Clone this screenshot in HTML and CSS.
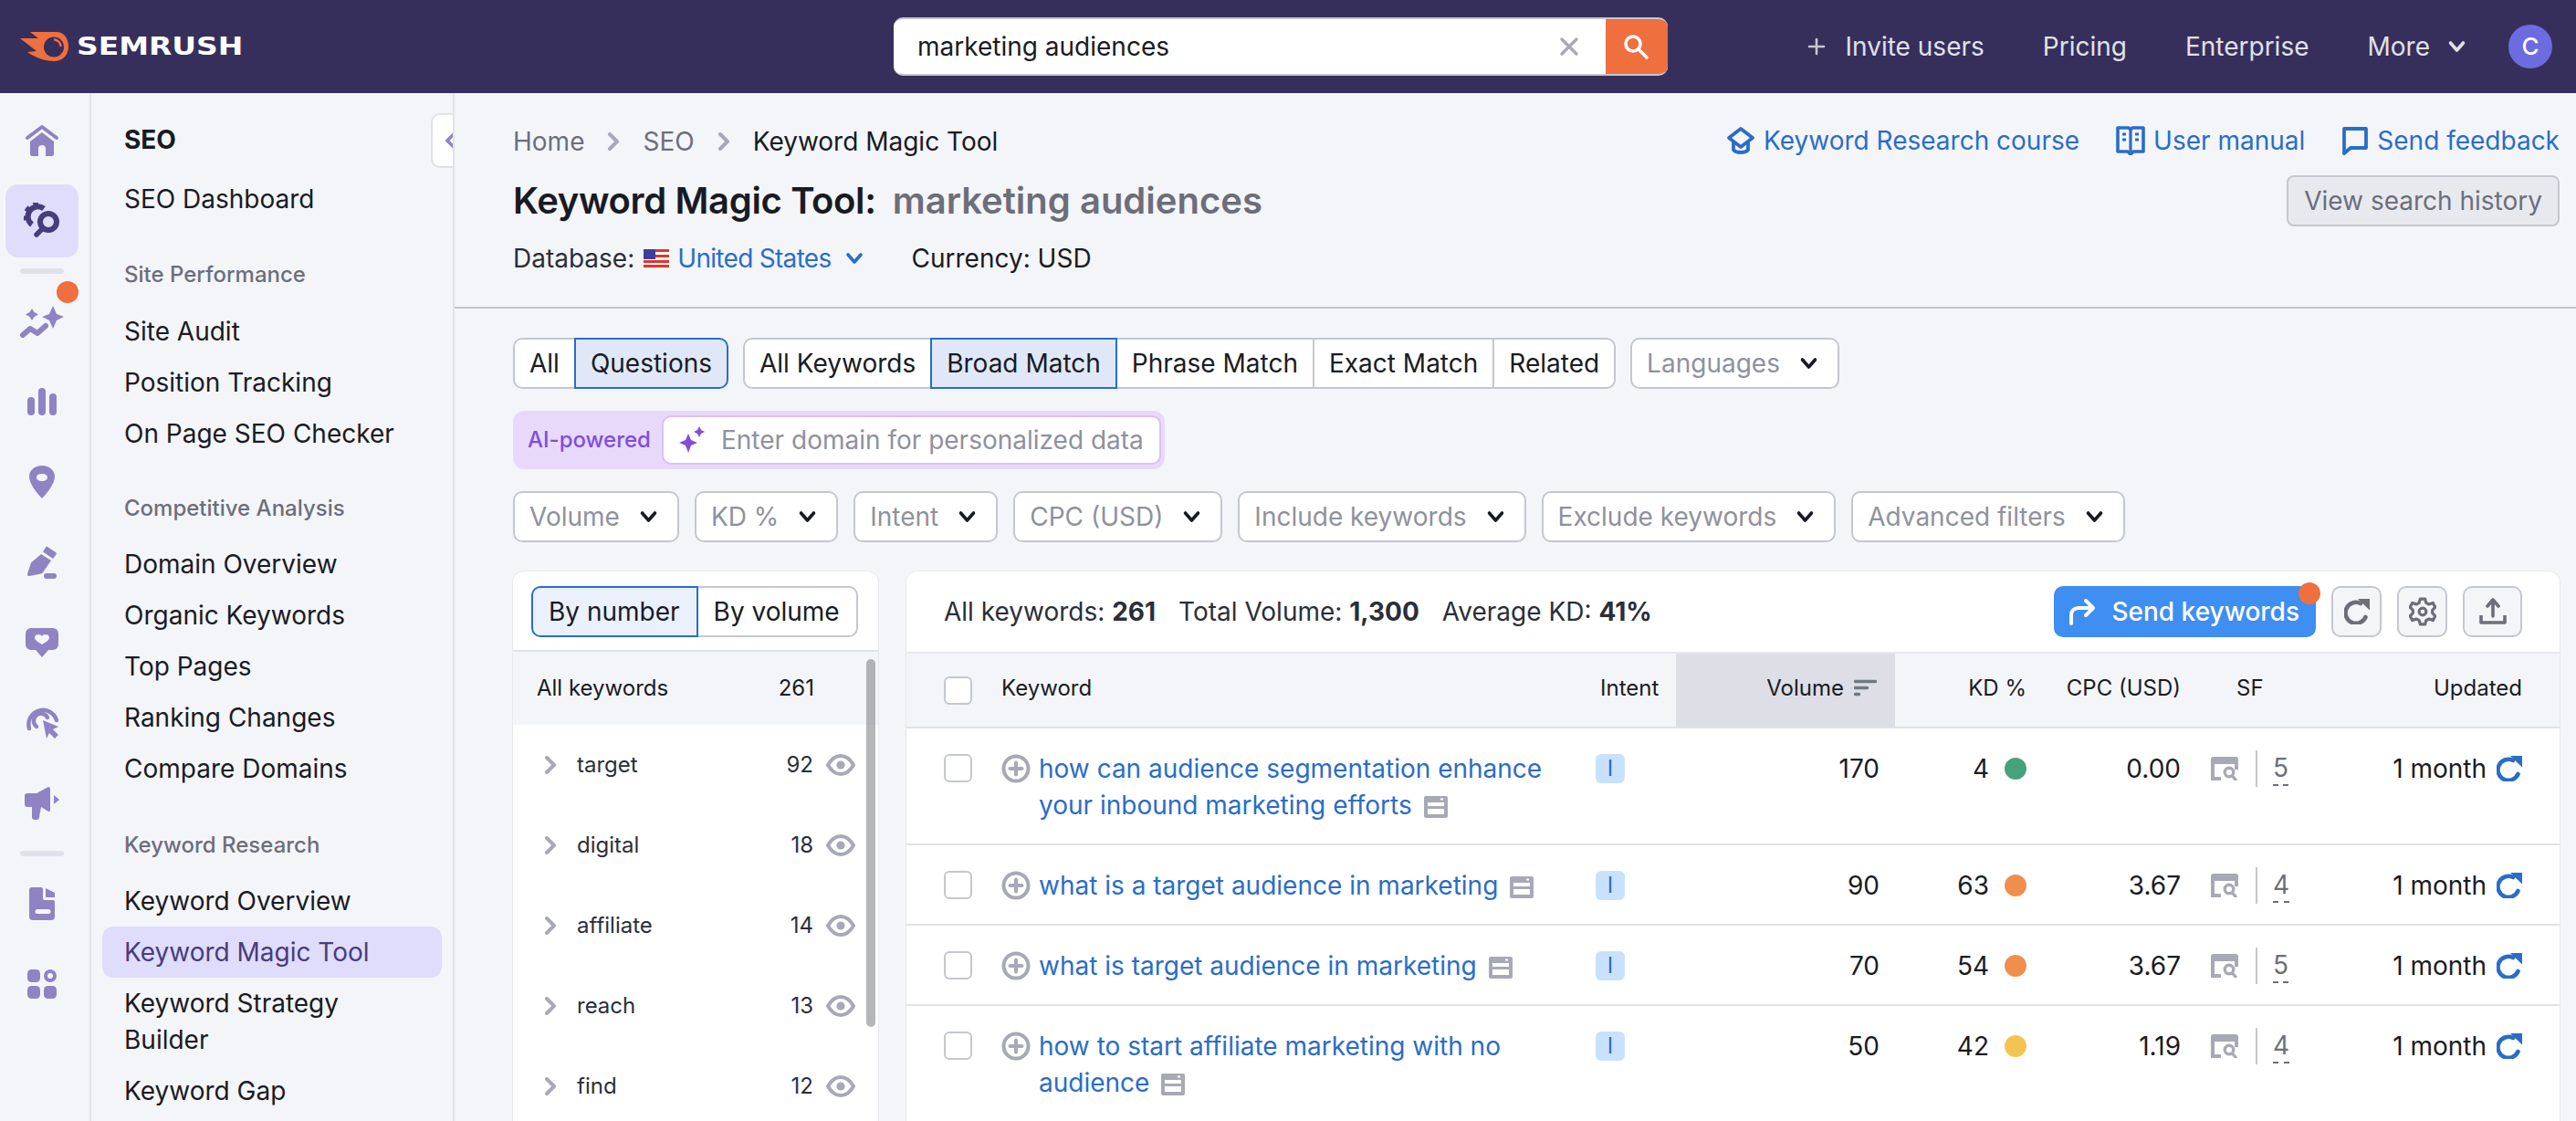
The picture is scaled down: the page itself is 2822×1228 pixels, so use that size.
FILE: index.html
```html
<!DOCTYPE html>
<html lang="en">
<head>
    <meta charset="UTF-8">
    <meta name="viewport" content="width=device-width, initial-scale=1.0">
    <title>Keyword Magic Tool</title>
    <link rel="stylesheet" href="styles.css">
</head>
<body>
    <svg class="sprite" width="0" height="0">
        <symbol id="chev-down" viewBox="0 0 20 14"><path d="M3 3l7 8 7-8" fill="none" stroke="currentColor" stroke-width="3.6" stroke-linecap="round" stroke-linejoin="round"/></symbol>
        <symbol id="chev-right" viewBox="0 0 14 20"><path d="M3 2l8 8-8 8" fill="none" stroke="currentColor" stroke-width="4" stroke-linecap="round" stroke-linejoin="round"/></symbol>
        <symbol id="eye" viewBox="0 0 32 24"><path d="M2 12C6 5 11 2 16 2s10 3 14 10c-4 7-9 10-14 10S6 19 2 12z" fill="none" stroke="currentColor" stroke-width="4"/><circle cx="16" cy="12" r="4.6" fill="currentColor"/></symbol>
        <symbol id="plus-circle" viewBox="0 0 32 32"><circle cx="16" cy="16" r="13.5" fill="none" stroke="currentColor" stroke-width="4"/><path d="M16 9.500v13M9.500 16h13" fill="none" stroke="currentColor" stroke-width="4" stroke-linecap="round"/></symbol>
        <symbol id="page" viewBox="0 0 26 24"><path fill-rule="evenodd" d="M2 0h22a2 2 0 0 1 2 2v20a2 2 0 0 1-2 2H2a2 2 0 0 1-2-2V2a2 2 0 0 1 2-2zm2 7v4h18V7zm0 7v6h18v-6z" fill="currentColor"/><rect x="18" y="2.500" width="3" height="2" fill="#fff"/></symbol>
        <symbol id="serp" viewBox="0 0 30 26"><path d="M0 3a3 3 0 0 1 3-3h24a3 3 0 0 1 3 3v5H0z" fill="currentColor"/><path d="M2 7v17h9M28 7v7" fill="none" stroke="currentColor" stroke-width="4"/><circle cx="20" cy="17" r="4.800" fill="none" stroke="currentColor" stroke-width="3.400"/><path d="M23.500 21l3.500 4" stroke="currentColor" stroke-width="3.400" stroke-linecap="round"/></symbol>
        <symbol id="refresh" viewBox="0 0 28 28"><path d="M23.500 20A11.500 11.500 0 1 1 18 5" fill="none" stroke="currentColor" stroke-width="4.600" stroke-linecap="round"/><path d="M15 0h13v12.500z" fill="currentColor"/></symbol>
    </svg>

    <header class="topbar">
        <a class="logo">
            <svg width="53" height="32" viewBox="0 0 53 32"><path d="M11 0h29c8 0 13 7 13 16s-6 16-16 16c-9 0-21-4-29-10l10-1L0 7h20z" fill="#ef6f3e"/><circle cx="37" cy="16.500" r="11" fill="#372f5b"/><path d="M38 8.500c3 .5 6 3 6.500 6.500" fill="none" stroke="#ef6f3e" stroke-width="2.400" stroke-linecap="round"/></svg>
            <span class="logo-text">SEMRUSH</span>
        </a>
        <div class="search">
            <span class="search-text">marketing audiences</span>
            <svg class="search-clear" width="24" height="24" viewBox="0 0 24 24"><path d="M4 4l16 16M20 4L4 20" stroke="#a8a9b6" stroke-width="3.400" stroke-linecap="round"/></svg>
            <button class="search-btn"><svg width="30" height="28" viewBox="0 0 30 28"><circle cx="11" cy="11" r="8" fill="none" stroke="#fff" stroke-width="3.600"/><path d="M17 17l9 9" stroke="#fff" stroke-width="3.600" stroke-linecap="round"/></svg></button>
        </div>
        <nav class="topnav">
            <a class="invite"><svg width="20" height="20" viewBox="0 0 20 20"><path d="M10 2v16M2 10h16" stroke="#c4c7cf" stroke-width="2.600" stroke-linecap="round"/></svg>Invite users</a>
            <a>Pricing</a>
            <a>Enterprise</a>
            <a class="more">More<svg width="23" height="14"><use href="#chev-down"/></svg></a>
        </nav>
        <div class="avatar">C</div>
    </header>

    <div class="layout">
        <aside class="rail">
            <a class="rail-item"><svg width="38" height="36" viewBox="0 0 38 36"><path d="M3 15L19 3l16 12" fill="none" stroke="currentColor" stroke-width="4" stroke-linecap="round" stroke-linejoin="round"/><path d="M19 9l13 10v14a2 2 0 0 1-2 2h-7v-8a4 4 0 0 0-8 0v8H8a2 2 0 0 1-2-2V19z" fill="currentColor"/></svg></a>
            <a class="rail-item active"><svg width="40" height="40" viewBox="0 0 40 40"><path d="M22 6.500A10.500 10.500 0 1 0 9 24" fill="none" stroke="currentColor" stroke-width="6"/><path d="M16 1.500A13.500 13.500 0 0 0 2.500 19" fill="none" stroke="currentColor" stroke-width="5" stroke-dasharray="5.500 5"/><circle cx="27" cy="21" r="9" fill="none" stroke="currentColor" stroke-width="6"/><path d="M20 29l-6 6" stroke="currentColor" stroke-width="5.500" stroke-linecap="round"/></svg></a>
            <div class="rail-sep"></div>
            <a class="rail-item has-dot"><svg width="48" height="36" viewBox="0 0 48 36"><path d="M36 1l4 9 8 3-8 4-4 9-4-9-8-4 8-3zM13 4l2.500 4 4.500 2.500-4.500 2.500L13 17l-2.500-4L6 10.500 10.500 8z" fill="currentColor"/><path d="M3 33l8-7 8 5 9-8" fill="none" stroke="currentColor" stroke-width="6" stroke-linecap="round" stroke-linejoin="round"/></svg></a>
            <a class="rail-item"><svg width="32" height="30" viewBox="0 0 32 30"><rect y="10" width="8" height="20" rx="4" fill="currentColor"/><rect x="12" width="8" height="30" rx="4" fill="currentColor"/><rect x="24" y="6" width="8" height="24" rx="4" fill="currentColor"/></svg></a>
            <a class="rail-item"><svg width="28" height="36" viewBox="0 0 28 36"><path fill-rule="evenodd" d="M14 0c8 0 14 5 14 12 0 8-9 19-14 24C9 31 0 20 0 12 0 5 6 0 14 0zm0 9c-3.500 0-6 1.500-6 4s2.500 4 6 4 6-1.500 6-4-2.500-4-6-4z" fill="currentColor"/></svg></a>
            <a class="rail-item"><svg width="32" height="36" viewBox="0 0 32 36"><path d="M22 1l9 6a2 2 0 0 1 .5 2.500L28 14 17 6.500l3-5a1.500 1.500 0 0 1 2-.500zM15 9l11 7-9 13a4 4 0 0 1-2 1.500L2 33c-1.500.3-2.400-1-2-2.400l4-12z" fill="currentColor"/><rect x="18" y="30" width="14" height="6" rx="3" fill="currentColor"/></svg></a>
            <a class="rail-item"><svg width="36" height="32" viewBox="0 0 36 32"><path fill-rule="evenodd" d="M6 0h24a6 6 0 0 1 6 6v12a6 6 0 0 1-6 6h-5l-7 8-7-8H6a6 6 0 0 1-6-6V6a6 6 0 0 1 6-6zm12 9c-2-3-8-2.500-8 1.500 0 3 4 5 8 7.500 4-2.500 8-4.500 8-7.500 0-4-6-4.500-8-1.500z" fill="currentColor"/></svg></a>
            <a class="rail-item"><svg width="36" height="36" viewBox="0 0 36 36"><path d="M4 24A15 15 0 1 1 34 15" fill="none" stroke="currentColor" stroke-width="4.400" stroke-linecap="round"/><path d="M12 22a8 8 0 1 1 12-10" fill="none" stroke="currentColor" stroke-width="4.400" stroke-linecap="round"/><path d="M19 15l17 7-6 3 6 6-4 4-6-6-3 6z" fill="currentColor"/></svg></a>
            <a class="rail-item"><svg width="38" height="36" viewBox="0 0 38 36"><path d="M0 10a3 3 0 0 1 3-3h10L26 0a2 2 0 0 1 2 2v24a2 2 0 0 1-2 1l-8-5-2 11a3 3 0 0 1-3 3h-2a3 3 0 0 1-3-3v-11H3a3 3 0 0 1-3-3z" fill="currentColor"/><path d="M32 9l6 5-6 5z" fill="currentColor"/></svg></a>
            <div class="rail-sep"></div>
            <a class="rail-item"><svg width="28" height="36" viewBox="0 0 28 36"><path fill-rule="evenodd" d="M3 0h10a2 2 0 0 1 2 2v10a2 2 0 0 0 2 2h9a2 2 0 0 1 2 2v16a4 4 0 0 1-4 4H4a4 4 0 0 1-4-4V3a3 3 0 0 1 3-3zm6 24a2 2 0 0 0 0 5h12a2 2 0 0 0 0-5z" fill="currentColor"/><path d="M18 1l10 5v5H19a1 1 0 0 1-1-1z" fill="currentColor"/></svg></a>
            <a class="rail-item"><svg width="32" height="32" viewBox="0 0 32 32"><rect width="14" height="14" rx="4.500" fill="currentColor"/><rect x="20" y="2" width="10" height="10" rx="5" fill="none" stroke="currentColor" stroke-width="4"/><rect y="18" width="14" height="14" rx="4.500" fill="currentColor"/><rect x="18" y="18" width="14" height="14" rx="4.500" fill="currentColor"/></svg></a>
        </aside>

        <aside class="sidenav">
            <div class="side-title">SEO</div>
            <a class="side-link">SEO Dashboard</a>
            <div class="side-group first">Site Performance</div>
            <a class="side-link">Site Audit</a>
            <a class="side-link">Position Tracking</a>
            <a class="side-link">On Page SEO Checker</a>
            <div class="side-group second">Competitive Analysis</div>
            <a class="side-link">Domain Overview</a>
            <a class="side-link">Organic Keywords</a>
            <a class="side-link">Top Pages</a>
            <a class="side-link">Ranking Changes</a>
            <a class="side-link">Compare Domains</a>
            <div class="side-group">Keyword Research</div>
            <a class="side-link">Keyword Overview</a>
            <a class="side-link active">Keyword Magic Tool</a>
            <a class="side-link">Keyword Strategy Builder</a>
            <a class="side-link">Keyword Gap</a>
            <button class="collapse"><svg width="20" height="20" viewBox="0 0 14 20"><path d="M11 2l-8 8 8 8" fill="none" stroke="#8f83c3" stroke-width="3.600" stroke-linecap="round" stroke-linejoin="round"/></svg></button>
        </aside>

        <main class="main">
            <section class="page-head">
                <div class="head-row">
                    <div class="crumbs">
                        <a>Home</a>
                        <svg width="14" height="20"><use href="#chev-right"/></svg>
                        <a>SEO</a>
                        <svg width="14" height="20"><use href="#chev-right"/></svg>
                        <span>Keyword Magic Tool</span>
                    </div>
                    <div class="head-links">
                        <a><svg width="32" height="32" viewBox="0 0 32 32"><path d="M16 3l13 10-13 10L3 13z" fill="none" stroke="currentColor" stroke-width="3.800" stroke-linejoin="round"/><path d="M8 18v8c3 4 13 4 16 0v-8" fill="none" stroke="currentColor" stroke-width="3.800"/></svg>Keyword Research course</a>
                        <a><svg width="32" height="32" viewBox="0 0 32 32"><path d="M2 2h12l2 2 2-2h12v26H19l-3 3-3-3H2z" fill="none" stroke="currentColor" stroke-width="3.600" stroke-linejoin="round"/><path d="M16 4v24M7 9h4M7 15h4M21 9h4M21 15h4" stroke="currentColor" stroke-width="3.200"/></svg>User manual</a>
                        <a><svg width="30" height="32" viewBox="0 0 30 32"><path d="M3 3h24v21H10l-7 6z" fill="none" stroke="currentColor" stroke-width="3.800" stroke-linejoin="round"/></svg>Send feedback</a>
                    </div>
                </div>
                <div class="title-row">
                    <h1><b>Keyword Magic Tool:</b> <span>marketing audiences</span></h1>
                    <button class="history">View search history</button>
                </div>
                <div class="db-row">
                    <span>Database:</span>
                    <svg class="flag" width="28" height="20" viewBox="0 0 28 20"><rect width="28" height="20" fill="#fff"/><path d="M0 1.500h28M0 7.500h28M0 13.500h28M0 18.500h28" stroke="#e0352b" stroke-width="3"/><rect width="13" height="11" fill="#3b3f97"/></svg>
                    <a class="db-link"><span class="db-name">United States</span><svg width="20" height="14"><use href="#chev-down"/></svg></a>
                    <span class="currency">Currency: USD</span>
                </div>
            </section>

            <section class="filters">
                <div class="filter-row">
                    <div class="seg">
                        <button class="seg-btn">All</button>
                        <button class="seg-btn on">Questions</button>
                    </div>
                    <div class="seg">
                        <button class="seg-btn">All Keywords</button>
                        <button class="seg-btn on">Broad Match</button>
                        <button class="seg-btn">Phrase Match</button>
                        <button class="seg-btn">Exact Match</button>
                        <button class="seg-btn">Related</button>
                    </div>
                    <button class="select">Languages<svg width="21" height="14"><use href="#chev-down"/></svg></button>
                </div>
                <div class="ai-box">
                    <span class="ai-label">AI-powered</span>
                    <div class="ai-input">
                        <svg width="28" height="30" viewBox="0 0 28 30"><path d="M10 8l3 7 7 3-7 3-3 8-3-8-7-3 7-3zM22 0l2 4 4 2-4 2-2 4-2-4-4-2 4-2z" fill="#7e4fd9"/></svg>
                        Enter domain for personalized data
                    </div>
                </div>
                <div class="filter-row tight">
                    <button class="select">Volume<svg width="21" height="14"><use href="#chev-down"/></svg></button>
                    <button class="select">KD %<svg width="21" height="14"><use href="#chev-down"/></svg></button>
                    <button class="select">Intent<svg width="21" height="14"><use href="#chev-down"/></svg></button>
                    <button class="select">CPC (USD)<svg width="21" height="14"><use href="#chev-down"/></svg></button>
                    <button class="select">Include keywords<svg width="21" height="14"><use href="#chev-down"/></svg></button>
                    <button class="select">Exclude keywords<svg width="21" height="14"><use href="#chev-down"/></svg></button>
                    <button class="select">Advanced filters<svg width="21" height="14"><use href="#chev-down"/></svg></button>
                </div>
            </section>

            <section class="panels">
                <div class="panel groups">
                    <div class="groups-head">
                        <div class="seg">
                            <button class="seg-btn small on">By number</button>
                            <button class="seg-btn small">By volume</button>
                        </div>
                    </div>
                    <div class="group-all"><span>All keywords</span><span>261</span></div>
                    <div class="group-row"><svg width="14" height="20"><use href="#chev-right"/></svg><span class="group-name">target</span><span>92</span><svg class="eye" width="32" height="24"><use href="#eye"/></svg></div>
                    <div class="group-row"><svg width="14" height="20"><use href="#chev-right"/></svg><span class="group-name">digital</span><span>18</span><svg class="eye" width="32" height="24"><use href="#eye"/></svg></div>
                    <div class="group-row"><svg width="14" height="20"><use href="#chev-right"/></svg><span class="group-name">affiliate</span><span>14</span><svg class="eye" width="32" height="24"><use href="#eye"/></svg></div>
                    <div class="group-row"><svg width="14" height="20"><use href="#chev-right"/></svg><span class="group-name">reach</span><span>13</span><svg class="eye" width="32" height="24"><use href="#eye"/></svg></div>
                    <div class="group-row"><svg width="14" height="20"><use href="#chev-right"/></svg><span class="group-name">find</span><span>12</span><svg class="eye" width="32" height="24"><use href="#eye"/></svg></div>
                    <div class="scroll-thumb"></div>
                </div>

                <div class="panel results">
                    <div class="results-head">
                        <div class="stats">
                            <span>All keywords: <b>261</b></span>
                            <span>Total Volume: <b>1,300</b></span>
                            <span>Average KD: <b>41%</b></span>
                        </div>
                        <div class="actions">
                            <button class="send">
                                <svg width="30" height="30" viewBox="0 0 30 30"><path d="M3 28V19c0-5 3-8 8-8h15" fill="none" stroke="#fff" stroke-width="4" stroke-linecap="round"/><path d="M19 3l8 8-8 8" fill="none" stroke="#fff" stroke-width="4" stroke-linecap="round" stroke-linejoin="round"/></svg>
                                Send keywords
                                <i class="send-dot"></i>
                            </button>
                            <button class="icon-btn"><svg width="28" height="28"><use href="#refresh"/></svg></button>
                            <button class="icon-btn"><svg width="30" height="32" viewBox="0 0 28 30"><path d="M11.500 2h5l1 4 3 1.500 4-1.500 2.500 4.500-3 3v3l3 3-2.500 4.500-4-1.500-3 1.500-1 4h-5l-1-4-3-1.500-4 1.500L1 19.500l3-3v-3l-3-3L3.500 6l4 1.500 3-1.500z" fill="none" stroke="currentColor" stroke-width="3" stroke-linejoin="round"/><circle cx="14" cy="15" r="3.600" fill="none" stroke="currentColor" stroke-width="3"/></svg></button>
                            <button class="icon-btn wide"><svg width="30" height="30" viewBox="0 0 30 30"><path d="M15 20V3M9 9l6-7 6 7" fill="none" stroke="currentColor" stroke-width="3.600" stroke-linecap="round" stroke-linejoin="round"/><path d="M2 19v8h26v-8" fill="none" stroke="currentColor" stroke-width="3.600" stroke-linejoin="round"/></svg></button>
                        </div>
                    </div>
                    <table class="kw-table">
                        <colgroup>
                            <col class="c-check"><col class="c-kw"><col class="c-intent"><col class="c-vol"><col class="c-kd"><col class="c-cpc"><col class="c-sf"><col class="c-upd">
                        </colgroup>
                        <thead>
                            <tr>
                                <th class="check"><span class="box"></span></th>
                                <th class="left">Keyword</th>
                                <th class="left th-intent">Intent</th>
                                <th class="sorted"><span class="sort-wrap">Volume<svg width="25" height="20" viewBox="0 0 25 20"><path d="M1.500 2.500h22M1.500 9.500h13M1.500 16.500h4" stroke="#6f7a80" stroke-width="3.400" stroke-linecap="round"/></svg></span></th>
                                <th>KD %</th>
                                <th>CPC (USD)</th>
                                <th class="left th-sf">SF</th>
                                <th class="th-upd">Updated</th>
                            </tr>
                        </thead>
                        <tbody>
                            <tr>
                                <td class="check"><span class="box"></span></td>
                                <td class="kw"><svg class="add" width="32" height="32"><use href="#plus-circle"/></svg><a>how can audience segmentation enhance your inbound marketing efforts <svg class="page-ico" width="26" height="24"><use href="#page"/></svg></a></td>
                                <td class="intent"><span class="badge">I</span></td>
                                <td class="vol">170</td>
                                <td class="kd"><span class="kd-wrap">4<i class="dot green"></i></span></td>
                                <td class="cpc">0.00</td>
                                <td class="sf"><span class="sf-wrap"><svg width="30" height="26"><use href="#serp"/></svg><i class="sf-sep"></i><span class="sf-num">5</span></span></td>
                                <td class="upd"><span class="upd-wrap">1 month<svg width="28" height="28"><use href="#refresh"/></svg></span></td>
                            </tr>
                            <tr>
                                <td class="check"><span class="box"></span></td>
                                <td class="kw"><svg class="add" width="32" height="32"><use href="#plus-circle"/></svg><a>what is a target audience in marketing <svg class="page-ico" width="26" height="24"><use href="#page"/></svg></a></td>
                                <td class="intent"><span class="badge">I</span></td>
                                <td class="vol">90</td>
                                <td class="kd"><span class="kd-wrap">63<i class="dot orange"></i></span></td>
                                <td class="cpc">3.67</td>
                                <td class="sf"><span class="sf-wrap"><svg width="30" height="26"><use href="#serp"/></svg><i class="sf-sep"></i><span class="sf-num">4</span></span></td>
                                <td class="upd"><span class="upd-wrap">1 month<svg width="28" height="28"><use href="#refresh"/></svg></span></td>
                            </tr>
                            <tr>
                                <td class="check"><span class="box"></span></td>
                                <td class="kw"><svg class="add" width="32" height="32"><use href="#plus-circle"/></svg><a>what is target audience in marketing <svg class="page-ico" width="26" height="24"><use href="#page"/></svg></a></td>
                                <td class="intent"><span class="badge">I</span></td>
                                <td class="vol">70</td>
                                <td class="kd"><span class="kd-wrap">54<i class="dot orange"></i></span></td>
                                <td class="cpc">3.67</td>
                                <td class="sf"><span class="sf-wrap"><svg width="30" height="26"><use href="#serp"/></svg><i class="sf-sep"></i><span class="sf-num">5</span></span></td>
                                <td class="upd"><span class="upd-wrap">1 month<svg width="28" height="28"><use href="#refresh"/></svg></span></td>
                            </tr>
                            <tr>
                                <td class="check"><span class="box"></span></td>
                                <td class="kw"><svg class="add" width="32" height="32"><use href="#plus-circle"/></svg><a>how to start affiliate marketing with no audience <svg class="page-ico" width="26" height="24"><use href="#page"/></svg></a></td>
                                <td class="intent"><span class="badge">I</span></td>
                                <td class="vol">50</td>
                                <td class="kd"><span class="kd-wrap">42<i class="dot yellow"></i></span></td>
                                <td class="cpc">1.19</td>
                                <td class="sf"><span class="sf-wrap"><svg width="30" height="26"><use href="#serp"/></svg><i class="sf-sep"></i><span class="sf-num">4</span></span></td>
                                <td class="upd"><span class="upd-wrap">1 month<svg width="28" height="28"><use href="#refresh"/></svg></span></td>
                            </tr>
                        </tbody>
                    </table>
                </div>
            </section>
        </main>
    </div>
</body>
</html>
```

FILE: styles.css
```css
* {
    box-sizing: border-box;
}

html, body {
    margin: 0;
    height: 100%;
    overflow: hidden;
}

body {
    background-color: #f4f5f9;
    color: #191b23;
    font-family: "Inter", "Noto Sans", sans-serif;
    font-size: 28px;
    line-height: 40px;
}

button {
    font: inherit;
    color: inherit;
    cursor: pointer;
}

svg {
    flex: none;
}

.sprite {
    position: absolute;
}

/* top bar */
.topbar {
    display: flex;
    align-items: center;
    height: 102px;
    padding-left: 22px;
    padding-right: 26px;
    background-color: #372f5b;
    color: #e0e1e9;
}

.logo {
    display: flex;
    align-items: center;
    gap: 9px;
    width: 241px;
    margin-top: -1px;
}

.logo-text {
    color: #fff;
    font-family: "DejaVu Sans", sans-serif;
    font-weight: 700;
    font-size: 27px;
    transform: scaleX(1.22);
    transform-origin: left center;
}

.search {
    display: flex;
    align-items: center;
    width: 848px;
    height: 64px;
    margin-left: 716px;
    padding-left: 26px;
    background-color: #fff;
    border-radius: 10px;
    border-top: 2px solid #c4c7cf;
    border-bottom: 2px solid #c4c7cf;
    color: #191b23;
    overflow: hidden;
}

.search-text {
    flex: 1;
}

.search-clear {
    margin-right: 28px;
}

.search-btn {
    display: flex;
    align-items: center;
    justify-content: center;
    width: 68px;
    height: 64px;
    border: 0;
    background-color: #ef6f3e;
}

.topnav {
    display: flex;
    align-items: center;
    gap: 64px;
    margin-left: auto;
}

.invite {
    display: flex;
    align-items: center;
    gap: 22px;
}

.more {
    display: flex;
    align-items: center;
    gap: 18px;
}

.avatar {
    display: flex;
    align-items: center;
    justify-content: center;
    width: 48px;
    height: 48px;
    margin-left: 45px;
    border-radius: 50%;
    background-color: #6c6ce0;
    color: #fff;
    font-weight: 500;
    font-size: 26px;
}

/* columns under the top bar */
.layout {
    display: flex;
    height: 1126px;
}

.rail {
    flex: none;
    display: flex;
    flex-direction: column;
    align-items: flex-start;
    gap: 8px;
    width: 100px;
    padding-top: 12px;
    padding-left: 6px;
    border-right: 2px solid #e0e1e9;
    color: #8f83c3;
}

.rail-item {
    position: relative;
    display: flex;
    align-items: center;
    justify-content: center;
    width: 80px;
    height: 80px;
    border-radius: 14px;
}

.rail-item.active {
    background-color: #e0dcfb;
    color: #473d7d;
}

.has-dot::after {
    content: "";
    position: absolute;
    top: -4px;
    right: 0;
    width: 24px;
    height: 24px;
    border-radius: 50%;
    background-color: #ef6f3e;
}

.rail-sep {
    width: 48px;
    height: 6px;
    margin: 4px 16px;
    border-radius: 3px;
    background-color: #e0e1e9;
}

.sidenav {
    position: relative;
    flex: none;
    width: 398px;
    padding: 23px 12px 0;
    border-right: 2px solid #e0e1e9;
}

.side-title {
    height: 56px;
    padding: 8px 24px;
    font-weight: 700;
}

.side-link {
    display: block;
    padding: 8px 24px;
    border-radius: 12px;
}

.side-title + .side-link {
    margin-top: 9px;
}

.side-link.active {
    background-color: #e0dcfb;
    color: #473d7d;
}

.side-group {
    margin-top: 36px;
    margin-bottom: 13px;
    padding-left: 24px;
    color: #6c6e79;
    font-size: 24px;
    font-weight: 500;
}

.side-group.first {
    margin-top: 35px;
    margin-bottom: 14px;
}

.side-group.second {
    margin-top: 34px;
}

.collapse {
    position: absolute;
    top: 22px;
    right: 0;
    display: flex;
    align-items: center;
    width: 24px;
    height: 60px;
    padding: 0 0 0 10px;
    border: 2px solid #e0e1e9;
    border-right: 0;
    border-radius: 10px 0 0 10px;
    background-color: #fff;
    overflow: hidden;
}

/* main area */
.main {
    flex: 1;
    min-width: 0;
}

.page-head {
    padding: 33px 18px 33px 64px;
    border-bottom: 2px solid #c4c7cf;
}

.head-row {
    display: flex;
    justify-content: space-between;
    align-items: center;
}

.crumbs {
    display: flex;
    align-items: center;
    gap: 25px;
    color: #6c6e79;
}

.crumbs svg {
    color: #a8a9b6;
}

.crumbs span {
    color: #191b23;
}

.head-links {
    display: flex;
    gap: 40px;
    margin-top: -3px;
}

.head-links a {
    display: flex;
    align-items: center;
    gap: 9px;
    color: #2a6dc7;
}

.title-row {
    display: flex;
    justify-content: space-between;
    align-items: center;
    margin-top: 17px;
}

h1 {
    margin: 0;
    font-size: 40px;
    line-height: 56px;
    font-weight: 600;
}

h1 b {
    font-weight: 600;
    letter-spacing: -0.35px;
}

h1 span {
    margin-left: 8px;
    color: #6c6e79;
}

.history {
    height: 56px;
    padding: 0 17px;
    border: 2px solid #c4c7cf;
    border-radius: 8px;
    background-color: #e8e9ee;
    color: #6c6e79;
}

.db-row {
    display: flex;
    align-items: center;
    margin-top: 15px;
    color: #2b2e38;
}

.flag {
    margin-left: 10px;
    margin-right: 9px;
}

.db-link {
    display: flex;
    align-items: center;
    gap: 15px;
    color: #2a6dc7;
}

.db-name {
    letter-spacing: -0.7px;
}

.currency {
    margin-left: 53px;
    color: #191b23;
}

.filters {
    padding: 32px 18px 0 64px;
}

.filter-row {
    display: flex;
    gap: 16px;
    height: 56px;
}

.filter-row.tight {
    gap: 17px;
    margin-top: 24px;
}

.seg {
    display: flex;
}

.seg-btn {
    height: 56px;
    margin-left: -2px;
    padding: 0 16px;
    border: 2px solid #c4c7cf;
    background-color: #fff;
}

.seg-btn:first-child {
    margin-left: 0;
    border-radius: 10px 0 0 10px;
}

.seg-btn:last-child {
    border-radius: 0 10px 10px 0;
}

.seg-btn.on {
    position: relative;
    border-color: #2a6dc7;
    background-color: #e0e8f8;
}

.seg-btn.small {
    padding: 0 18px 0 17px;
}

.seg-btn.small.on {
    background-color: #eaf1fd;
}

.select {
    display: flex;
    align-items: center;
    gap: 21px;
    height: 56px;
    padding: 0 21px 0 16px;
    border: 2px solid #c4c7cf;
    border-radius: 10px;
    background-color: #fff;
    color: #8f919d;
}

.select svg {
    color: #191b23;
}

.ai-box {
    display: flex;
    align-items: center;
    width: 714px;
    height: 64px;
    margin-top: 24px;
    padding: 0 4px 0 16px;
    border-radius: 12px;
    background-color: #e8d9fb;
}

.ai-label {
    width: 147px;
    color: #7e4fd9;
    font-size: 24px;
    font-weight: 500;
}

.ai-input {
    display: flex;
    align-items: center;
    gap: 18px;
    flex: 1;
    height: 54px;
    padding-left: 17px;
    border: 2px solid #d9bff8;
    border-radius: 10px;
    background-color: #fff;
    color: #8f919d;
}

/* panels */
.panels {
    display: flex;
    gap: 31px;
    margin-top: 32px;
    padding: 0 18px 0 64px;
}

.panel {
    position: relative;
    background-color: #fff;
    border-radius: 12px 12px 0 0;
    box-shadow: 0 0 0 1px #e8e9ef;
}

.groups {
    flex: none;
    width: 400px;
    height: 640px;
    font-size: 24px;
}

.groups-head {
    height: 88px;
    padding: 16px 20px 0;
    border-bottom: 2px solid #e0e1e9;
    font-size: 28px;
}

.group-all {
    display: flex;
    justify-content: space-between;
    align-items: center;
    height: 80px;
    padding: 0 70px 0 26px;
    background-color: #f4f5f9;
}

.group-row {
    display: flex;
    align-items: center;
    height: 88px;
    padding: 0 25px 0 34px;
    color: #2b2e38;
}

.group-row > svg:first-child {
    color: #a8a9b6;
}

.group-name {
    flex: 1;
    margin-left: 22px;
}

.eye {
    margin-left: 14px;
    color: #a8a9b6;
}

.scroll-thumb {
    position: absolute;
    top: 96px;
    right: 3px;
    width: 10px;
    height: 403px;
    border-radius: 5px;
    background-color: rgba(120, 122, 130, 0.55);
}

.results {
    flex: 1;
    min-width: 0;
    height: 640px;
}

.results-head {
    display: flex;
    justify-content: space-between;
    align-items: center;
    height: 88px;
    padding: 0 41px;
}

.stats {
    display: flex;
    gap: 25px;
    color: #2b2e38;
}

.stats b {
    font-weight: 700;
}

.actions {
    display: flex;
    align-items: center;
    gap: 17px;
}

.send {
    position: relative;
    display: flex;
    align-items: center;
    gap: 17px;
    height: 56px;
    padding: 0 18px 0 16px;
    border: 0;
    border-radius: 10px;
    background-color: #3f8ef1;
    color: #fff;
    font-weight: 500;
}

.send-dot {
    position: absolute;
    top: -4px;
    right: -5px;
    width: 24px;
    height: 24px;
    border-radius: 50%;
    background-color: #ef6f3e;
}

.icon-btn {
    display: flex;
    align-items: center;
    justify-content: center;
    width: 55px;
    height: 56px;
    padding: 0;
    border: 2px solid #c4c7cf;
    border-radius: 10px;
    background-color: #f4f5f9;
    color: #6c6e79;
}

.icon-btn.wide {
    width: 65px;
}

.kw-table {
    width: 100%;
    table-layout: fixed;
    border-collapse: separate;
    border-spacing: 0;
}

.c-check { width: 104px; }
.c-kw { width: 651px; }
.c-intent { width: 88px; }
.c-vol { width: 240px; }
.c-kd { width: 144px; }
.c-cpc { width: 169px; }
.c-sf { width: 171px; }

.kw-table th {
    height: 84px;
    padding: 0 0 4px;
    background-color: #f4f5f9;
    border-top: 2px solid #e8e9ef;
    border-bottom: 2px solid #e0e1e9;
    font-size: 24px;
    font-weight: 400;
    text-align: right;
}

.kw-table th.left {
    text-align: left;
}

.kw-table th.check {
    vertical-align: middle;
    text-align: left;
    padding: 0 0 0 41px;
}

.kw-table th.th-intent {
    padding-left: 5px;
}

.kw-table th.sorted {
    background-color: #dddee6;
    padding-right: 20px;
}

.sort-wrap {
    display: inline-flex;
    align-items: center;
    gap: 11px;
}

.kw-table th.th-sf {
    padding-left: 61px;
}

.kw-table th.th-upd {
    padding-right: 41px;
}

.box {
    display: block;
    width: 31px;
    height: 31px;
    border: 2px solid #c4c7cf;
    border-radius: 6px;
    background-color: #fff;
}

.kw-table td {
    padding: 24px 0 22px;
    border-bottom: 2px solid #e0e1e9;
    vertical-align: top;
}

.kw-table td.check {
    padding-left: 41px;
    padding-top: 28px;
}

.kw-table td.kw {
    display: flex;
    gap: 9px;
}

.add {
    color: #a8a9b6;
    margin-top: 4px;
}

.kw a {
    max-width: 590px;
    color: #2a6dc7;
}

.page-ico {
    margin-left: 5px;
    vertical-align: -4px;
    color: #a8a9b6;
}

.badge {
    display: flex;
    align-items: center;
    justify-content: center;
    width: 32px;
    height: 32px;
    margin-top: 4px;
    border-radius: 6px;
    background-color: #c8e2fd;
    color: #2a6dc7;
    font-size: 24px;
}

.vol,
.kd,
.cpc,
.upd {
    text-align: right;
}

.kw-table td.vol {
    padding-right: 17px;
}

.kd-wrap {
    display: inline-flex;
    align-items: center;
    gap: 17px;
}

.dot {
    width: 24px;
    height: 24px;
    border-radius: 50%;
}

.green { background-color: #46a17f; }
.orange { background-color: #f08f4d; }
.yellow { background-color: #f4c453; }

.kw-table td.sf {
    padding-left: 33px;
}

.sf-wrap {
    display: flex;
    align-items: center;
    color: #a8a9b6;
}

.sf-sep {
    width: 2px;
    height: 40px;
    margin: 0 17px 0 19px;
    background-color: #c4c7cf;
}

.sf-num {
    color: #6c6e79;
    border-bottom: 2px dashed #6c6e79;
    line-height: 36px;
}

.kw-table td.upd {
    padding-right: 41px;
}

.upd-wrap {
    display: inline-flex;
    align-items: center;
    gap: 11px;
}

.upd-wrap svg {
    color: #2a6dc7;
}
```
